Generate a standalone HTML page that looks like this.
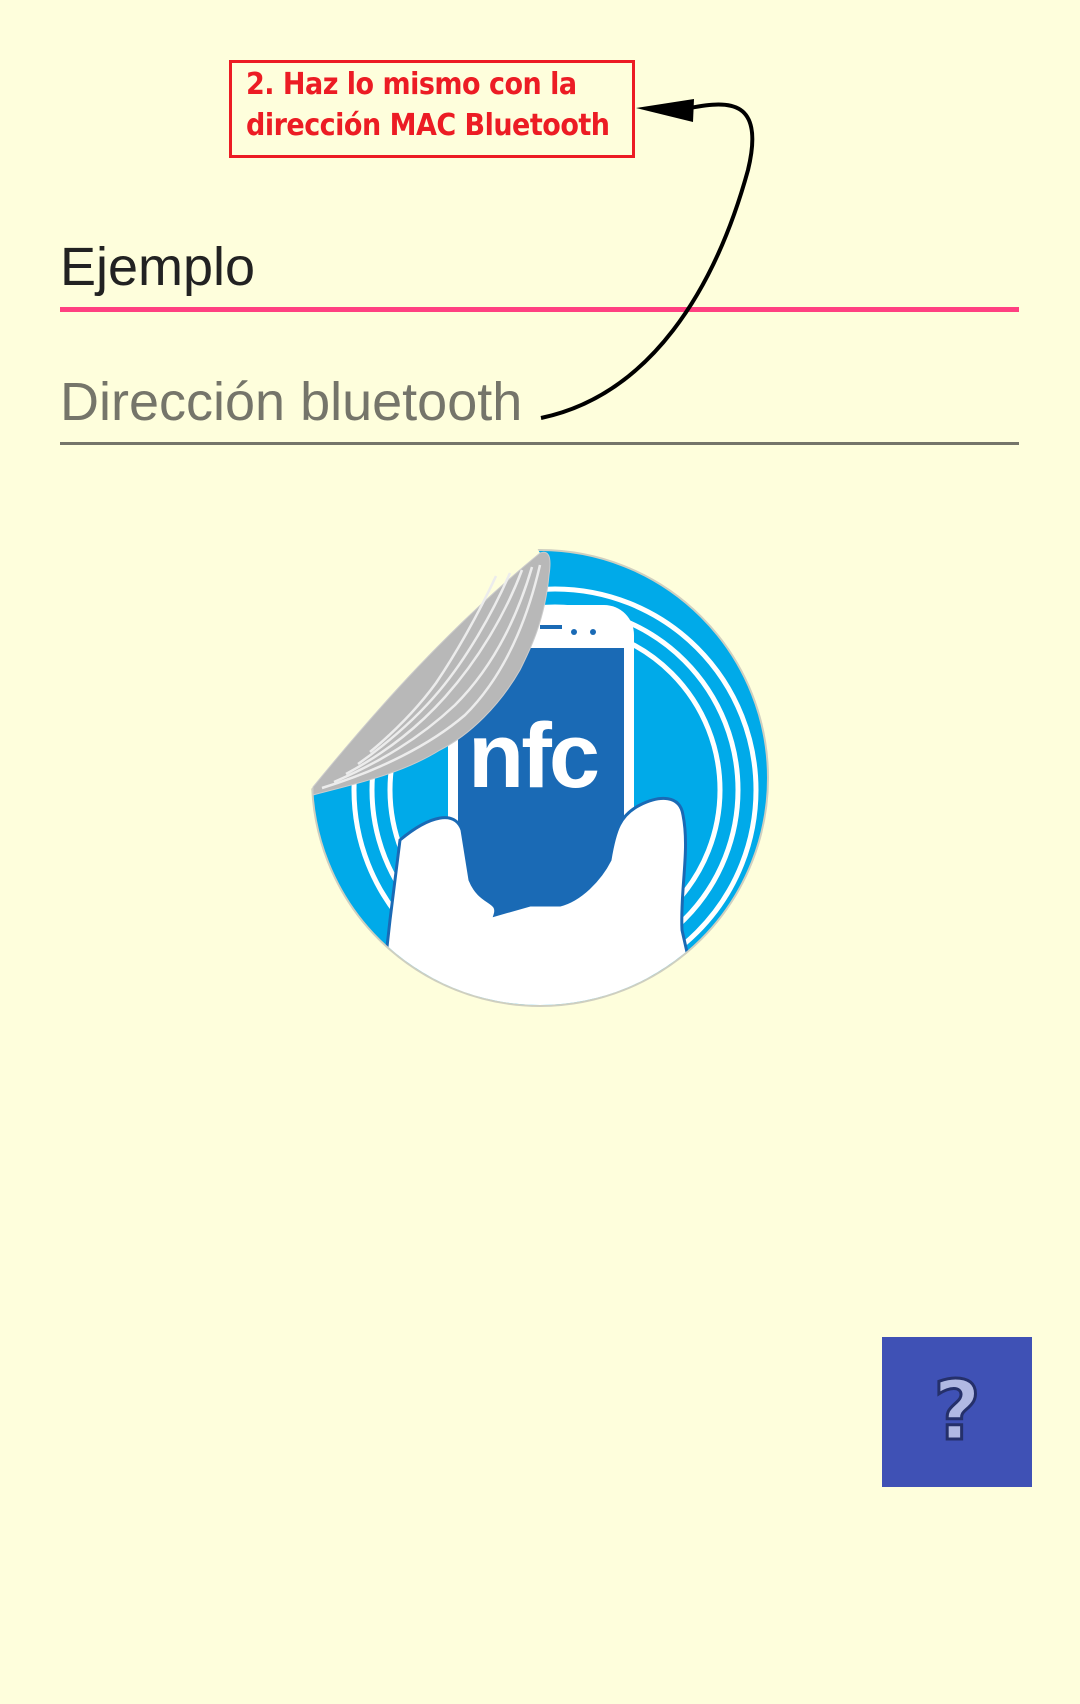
<!DOCTYPE html>
<html><head><meta charset="utf-8"><style>
html,body{margin:0;padding:0;width:1080px;height:1704px;background:#fefedc;overflow:hidden;position:relative;font-family:"Liberation Sans",sans-serif}
.box{position:absolute;left:229px;top:60px;border:3px solid #ec1c24;box-sizing:border-box;width:406px;height:98px;color:#ec1c24;font-weight:bold;font-size:30px;line-height:41px;padding:1px 0 0 14px;font-family:"DejaVu Sans Condensed","Liberation Sans Narrow","Liberation Sans",sans-serif;letter-spacing:-0.5px;white-space:nowrap}
.t1{position:absolute;left:60px;top:236px;font-size:54px;color:#222}
.l1{position:absolute;left:60px;top:307px;width:959px;height:5px;background:#ff4081}
.t2{position:absolute;left:60px;top:371px;font-size:54px;color:#75756a}
.l2{position:absolute;left:60px;top:442px;width:959px;height:3px;background:#75756a}
.btn{position:absolute;left:882px;top:1337px;width:150px;height:150px;background:#3f51b5}
.q{position:absolute;left:0;top:0;width:150px;height:150px;text-align:center;line-height:150px;font-size:82px;font-weight:bold;color:#b1b9e3;-webkit-text-stroke:3px #25306a;font-family:"DejaVu Sans",sans-serif}
</style></head><body>
<div class="box">2. Haz lo mismo con la<br>dirección MAC Bluetooth</div>
<div class="t1">Ejemplo</div>
<div class="l1"></div>
<div class="t2">Dirección bluetooth</div>
<div class="l2"></div>
<svg width="1080" height="1704" style="position:absolute;left:0;top:0">
<path d="M541,418 C650,395 715,290 748,170 C765,100 730,100 690,108" fill="none" stroke="#000" stroke-width="4"/>
<polygon points="636,108 694,99 693,122" fill="#000"/>
<defs><clipPath id="c"><circle cx="540" cy="778" r="227"/></clipPath></defs>
<circle cx="540" cy="778" r="228" fill="#00aae9" stroke="#cfcfc0" stroke-width="2"/>
<g clip-path="url(#c)" fill="none" stroke="#fff" stroke-width="5">
<circle cx="555" cy="790" r="165"/><circle cx="555" cy="790" r="183"/><circle cx="555" cy="790" r="201"/>
</g>
<rect x="448" y="605" width="186" height="330" rx="30" fill="#fff"/>
<rect x="458" y="648" width="166" height="300" fill="#1a6ab5"/>
<rect x="540" y="625" width="22" height="4" fill="#1a6ab5"/>
<circle cx="574" cy="632" r="3" fill="#1a6ab5"/><circle cx="593" cy="632" r="3" fill="#1a6ab5"/>
<text x="468" y="787" font-family="Liberation Sans" font-weight="bold" font-size="92" fill="#fff" letter-spacing="-3">nfc</text>
<g clip-path="url(#c)">
<path d="M400,840 C430,815 455,810 462,830 L470,880 C480,905 500,900 495,915 L530,905 L560,905 C580,900 600,880 610,860 C615,830 620,815 640,805 C660,795 680,795 683,815 C690,850 680,890 682,930 L700,1010 L380,1010 L390,920 Z" fill="#fff" stroke="#1a6ab5" stroke-width="3"/>
</g>
<path d="M300,800 L313,787 C380,705 450,627 540,553 L520,520 L280,520 L280,800 Z" fill="#fefedc"/>
<path d="M313,787 C380,705 450,627 540,553 C548,550 552,555 549,575 C545,620 530,650 520,670 C500,705 470,735 440,750 C400,775 350,785 313,795 Z" fill="#b8b8b8" stroke="#ccc" stroke-width="1"/>
<g fill="none" stroke="#ececec" stroke-width="2.5">
<path d="M322,788 C380,770 430,745 465,715 C500,680 525,630 540,565"/>
<path d="M334,782 C380,762 420,738 455,705 C490,670 515,625 532,567"/>
<path d="M346,774 C390,750 420,725 445,697 C478,660 505,615 522,570"/>
<path d="M358,764 C395,738 420,714 440,690 C465,660 492,615 510,573"/>
<path d="M370,752 C400,727 420,705 436,683 C455,655 478,615 496,576"/>
</g>
</svg>
<div class="btn"><div class="q">?</div></div>
</body></html>
